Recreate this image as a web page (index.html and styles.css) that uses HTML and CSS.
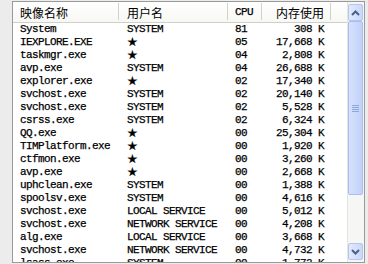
FILE: index.html
```html
<!DOCTYPE html>
<html lang="zh-CN">
<head>
    <meta charset="UTF-8">
    <title>进程</title>
    <link rel="stylesheet" href="styles.css">
</head>
<body>

    <div class="listbox">
        <div class="list">
            <div class="header">
                <div class="col name">映像名称</div>
                <div class="col user">用户名</div>
                <div class="col cpu mono">CPU</div>
                <div class="col mem">内存使用</div>
                <div class="col rest"></div>
            </div>

            <div class="row"><div class="name">System</div><div class="user">SYSTEM</div><div class="cpu">81</div><div class="mem">308 K</div></div>
            <div class="row"><div class="name">IEXPLORE.EXE</div><div class="user"><span class="star">★</span></div><div class="cpu">05</div><div class="mem">17,668 K</div></div>
            <div class="row"><div class="name">taskmgr.exe</div><div class="user"><span class="star">★</span></div><div class="cpu">04</div><div class="mem">2,808 K</div></div>
            <div class="row"><div class="name">avp.exe</div><div class="user">SYSTEM</div><div class="cpu">04</div><div class="mem">26,688 K</div></div>
            <div class="row"><div class="name">explorer.exe</div><div class="user"><span class="star">★</span></div><div class="cpu">02</div><div class="mem">17,340 K</div></div>
            <div class="row"><div class="name">svchost.exe</div><div class="user">SYSTEM</div><div class="cpu">02</div><div class="mem">20,140 K</div></div>
            <div class="row"><div class="name">svchost.exe</div><div class="user">SYSTEM</div><div class="cpu">02</div><div class="mem">5,528 K</div></div>
            <div class="row"><div class="name">csrss.exe</div><div class="user">SYSTEM</div><div class="cpu">02</div><div class="mem">6,324 K</div></div>
            <div class="row"><div class="name">QQ.exe</div><div class="user"><span class="star">★</span></div><div class="cpu">00</div><div class="mem">25,304 K</div></div>
            <div class="row"><div class="name">TIMPlatform.exe</div><div class="user"><span class="star">★</span></div><div class="cpu">00</div><div class="mem">1,920 K</div></div>
            <div class="row"><div class="name">ctfmon.exe</div><div class="user"><span class="star">★</span></div><div class="cpu">00</div><div class="mem">3,260 K</div></div>
            <div class="row"><div class="name">avp.exe</div><div class="user"><span class="star">★</span></div><div class="cpu">00</div><div class="mem">2,668 K</div></div>
            <div class="row"><div class="name">uphclean.exe</div><div class="user">SYSTEM</div><div class="cpu">00</div><div class="mem">1,388 K</div></div>
            <div class="row"><div class="name">spoolsv.exe</div><div class="user">SYSTEM</div><div class="cpu">00</div><div class="mem">4,616 K</div></div>
            <div class="row"><div class="name">svchost.exe</div><div class="user">LOCAL SERVICE</div><div class="cpu">00</div><div class="mem">5,012 K</div></div>
            <div class="row"><div class="name">svchost.exe</div><div class="user">NETWORK SERVICE</div><div class="cpu">00</div><div class="mem">4,208 K</div></div>
            <div class="row"><div class="name">alg.exe</div><div class="user">LOCAL SERVICE</div><div class="cpu">00</div><div class="mem">3,668 K</div></div>
            <div class="row"><div class="name">svchost.exe</div><div class="user">NETWORK SERVICE</div><div class="cpu">00</div><div class="mem">4,732 K</div></div>
            <div class="row"><div class="name">lsass.exe</div><div class="user">SYSTEM</div><div class="cpu">00</div><div class="mem">1,772 K</div></div>
        </div>

        <div class="scrollbar">
            <div class="sb-btn">
                <svg width="9" height="6" viewBox="0 0 9 6"><path d="M1 5 L4.5 1.5 L8 5" fill="none" stroke="#4d6185" stroke-width="2"/></svg>
            </div>
            <div class="sb-thumb">
                <div class="grip"></div>
            </div>
            <div class="sb-track"></div>
            <div class="sb-btn">
                <svg width="9" height="6" viewBox="0 0 9 6"><path d="M1 1 L4.5 4.5 L8 1" fill="none" stroke="#4d6185" stroke-width="2"/></svg>
            </div>
        </div>
    </div>

</body>
</html>
```

FILE: styles.css
```css
body {
    margin: 0;
    padding: 1px 0 0 12px;
    background-color: #ececec;
    font-family: "Liberation Mono", monospace;
}

.listbox {
    display: flex;
    width: 351px;
    height: 260px;
    border: 1px solid #9a9a9a;
    background-color: #fff;
    overflow: hidden;
}

.list {
    flex: 1;
    overflow: hidden;
}

.header {
    display: flex;
    height: 20px;
    border-bottom: 1px solid #d0d0c8;
    background: linear-gradient(#ffffff, #f7f7f4);
    font-family: "Noto Sans CJK SC", sans-serif;
    font-size: 12px;
    color: #000;
}

.header .col {
    display: flex;
    align-items: center;
    height: 20px;
    box-sizing: border-box;
    position: relative;
}

.header .col::after {
    content: "";
    position: absolute;
    right: 0;
    top: 1px;
    bottom: 2px;
    width: 1px;
    background-color: #d2d2cc;
}

.header .rest::after {
    display: none;
}

.header .mono {
    font-family: "Liberation Mono", monospace;
    font-size: 11px;
    letter-spacing: -0.6px;
    -webkit-text-stroke: 0.25px #000;
}

.header .mem {
    justify-content: flex-end;
}

.name {
    width: 106px;
    padding-left: 7px;
}

.user {
    width: 109px;
    padding-left: 8px;
}

.cpu {
    width: 34px;
    padding-left: 7px;
}

.mem {
    width: 69px;
    padding-right: 7px;
    text-align: right;
}

.rest {
    flex: 1;
}

.name, .user, .cpu, .mem {
    box-sizing: border-box;
    white-space: nowrap;
}

.row {
    display: flex;
    height: 13px;
    line-height: 13px;
    font-size: 11px;
    letter-spacing: -0.6px;
    color: #000;
    -webkit-text-stroke: 0.25px #000;
}

.star {
    font-family: "DejaVu Sans", sans-serif;
    font-size: 12px;
    letter-spacing: 0;
    line-height: 13px;
}

.scrollbar {
    width: 17px;
    display: flex;
    flex-direction: column;
    padding: 2px 0;
    box-sizing: border-box;
    background-color: #f6f6f4;
    border-left: 1px solid #e6e6e0;
}

.sb-btn {
    height: 17px;
    margin: 0 1px 0 0;
    display: flex;
    align-items: center;
    justify-content: center;
    box-sizing: border-box;
    border: 1px solid #b4c6ee;
    border-radius: 2px;
    background: linear-gradient(to right, #e2eafd, #c8d7fb);
}

.sb-thumb {
    height: 174px;
    margin-right: 1px;
    box-sizing: border-box;
    border: 1px solid #aabdf0;
    border-radius: 2px;
    background: linear-gradient(to right, #d6e1fc, #c0d2fa);
    display: flex;
    align-items: center;
    justify-content: center;
}

.grip {
    width: 7px;
    height: 7px;
    background: repeating-linear-gradient(#8fa6d6 0 1px, transparent 1px 2px);
}

.sb-track {
    flex: 1;
}
```
